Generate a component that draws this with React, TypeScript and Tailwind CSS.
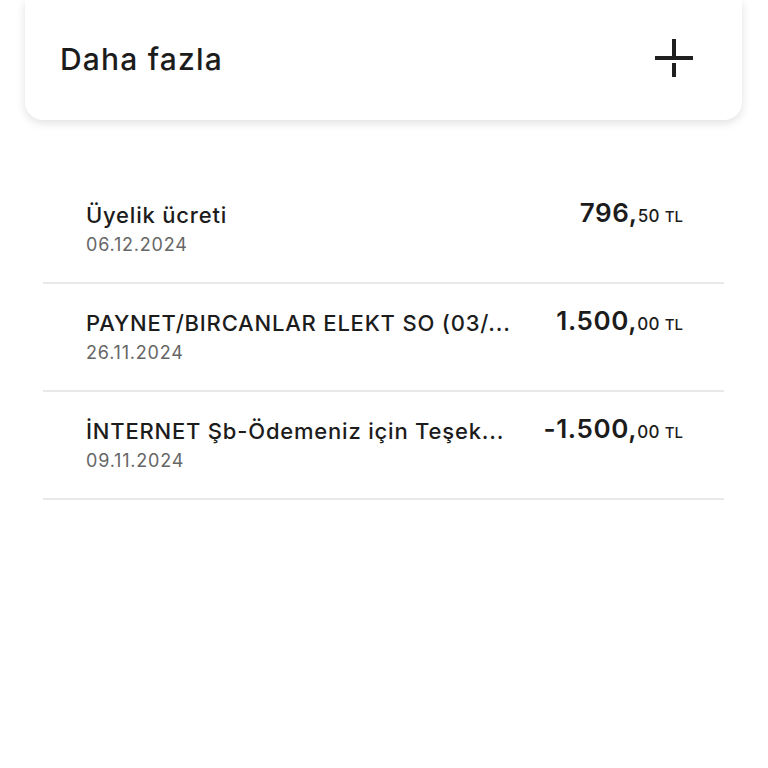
import React from "react";

const rows = [
  { title: "Üyelik ücreti", date: "06.12.2024", main: "796", cents: "50" },
  { title: "PAYNET/BIRCANLAR ELEKT SO (03/...", date: "26.11.2024", main: "1.500", cents: "00" },
  { title: "İNTERNET Şb-Ödemeniz için Teşek...", date: "09.11.2024", main: "-1.500", cents: "00" },
];

function PlusIcon() {
  return (
    <svg width="40" height="40" viewBox="0 0 40 40" fill="none">
      <rect x="1" y="17" width="38" height="4" fill="#1f1f1f" />
      <rect x="18" y="0" width="4" height="19" fill="#1f1f1f" />
      <rect x="18" y="24" width="4" height="14" fill="#1f1f1f" />
    </svg>
  );
}

export default function App() {
  return (
    <div
      className="min-h-[768px] w-full bg-white text-[#1c1c1c]"
      style={{ fontFamily: "Inter, 'Noto Sans', sans-serif" }}
    >
      <div className="ml-[25px] mr-[26px] h-[120px] rounded-b-[18px] bg-white shadow-[0_3px_10px_rgba(0,0,0,0.12)] flex items-center justify-between pl-[35px] pr-[48px] pb-[2px]">
        <span className="text-[30px] font-medium tracking-[1.2px]">Daha fazla</span>
        <PlusIcon />
      </div>

      <div className="mt-[56px] ml-[43px] mr-[44px]">
        {rows.map((r, i) => (
          <div
            key={i}
            className="h-[108px] border-b-2 border-[#e8e8e8] flex flex-col justify-center pl-[43px] pr-[41px] pb-[2px]"
          >
            <div className="flex items-center justify-between gap-[30px]">
              <span className="text-[22px] font-medium whitespace-nowrap leading-[28px] tracking-[0.8px]">{r.title}</span>
              <span className="shrink-0 whitespace-nowrap leading-[28px]">
                <span className="text-[26px] font-semibold tracking-[0.6px]">{r.main},</span>
                <span className="text-[17px] font-medium tracking-[0.3px]">{r.cents}</span>
                <span className="text-[15px] font-medium ml-[5px]">TL</span>
              </span>
            </div>
            <span className="text-[18px] text-[#666666] leading-[24px] mt-[2px] tracking-[0.8px]">{r.date}</span>
          </div>
        ))}
      </div>
    </div>
  );
}
